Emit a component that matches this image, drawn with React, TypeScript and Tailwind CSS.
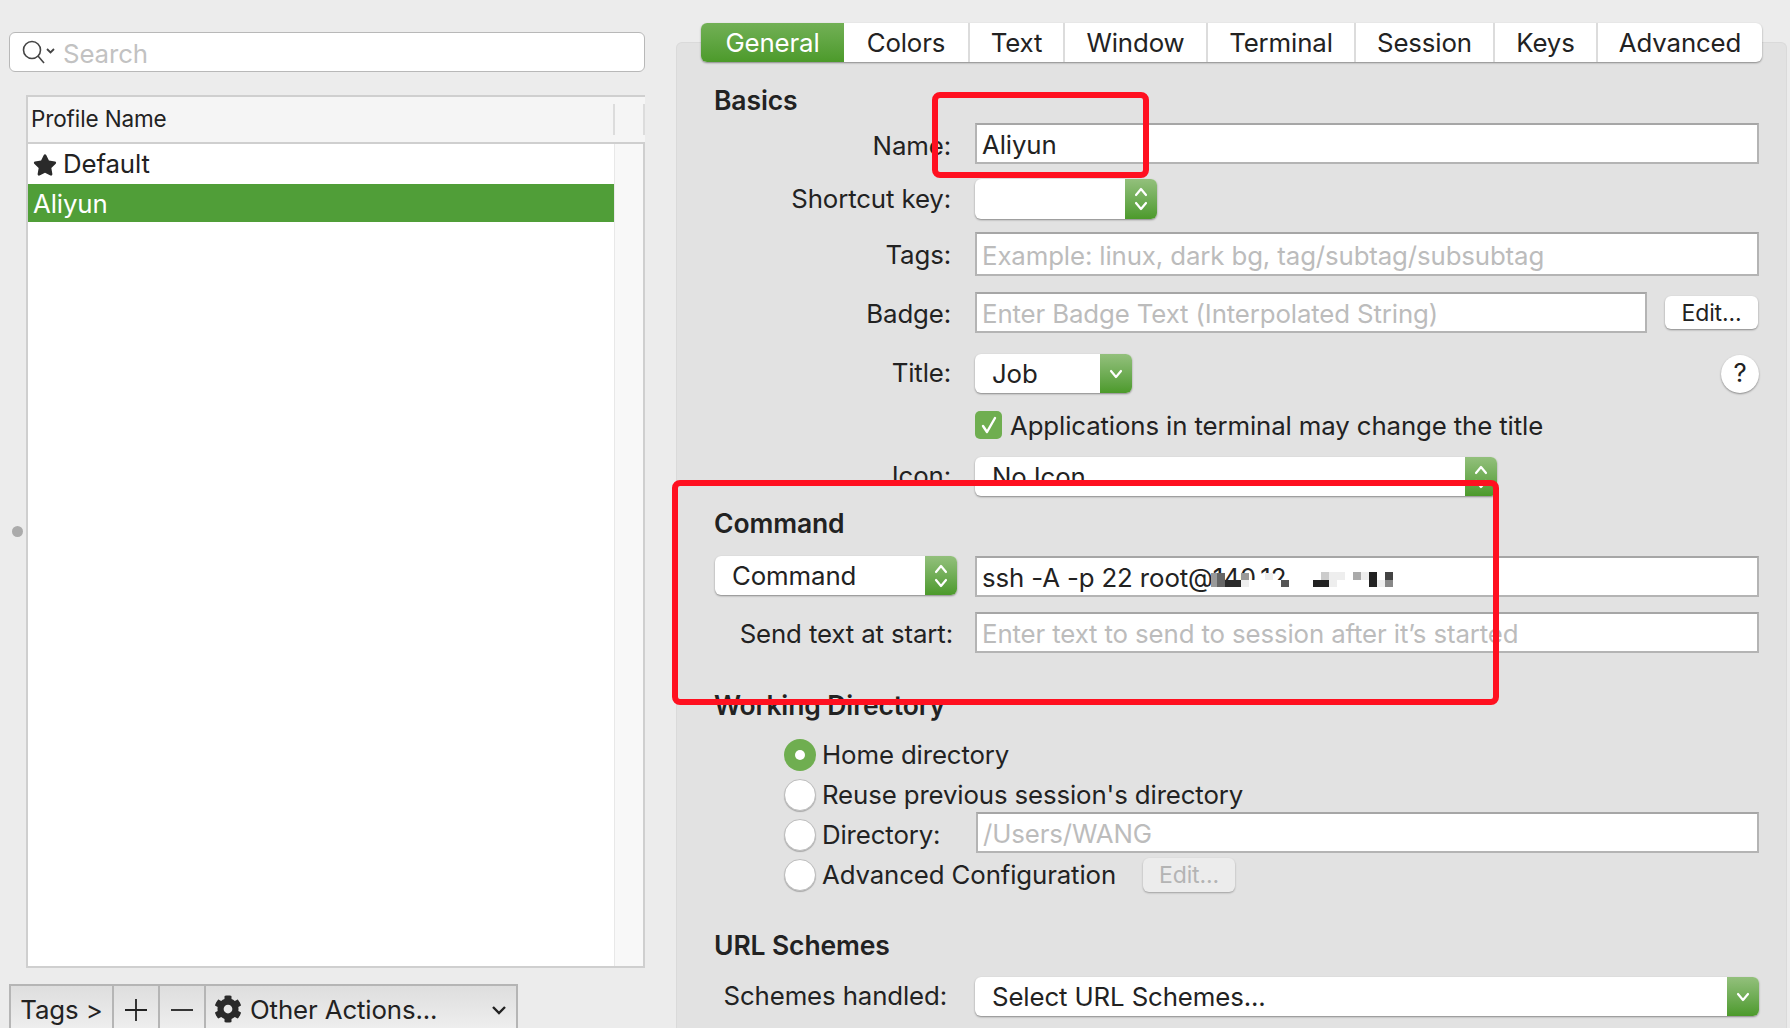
import type { ReactNode } from "react";
import { FaCog, FaStar } from "react-icons/fa";

const tabs = [
  { name: "Colors", w: "w-[124px]" },
  { name: "Text", w: "w-[95px]" },
  { name: "Window", w: "w-[143px]" },
  { name: "Terminal", w: "w-[148px]" },
  { name: "Session", w: "w-[139px]" },
  { name: "Keys", w: "w-[103px]" },
  { name: "Advanced", w: "flex-1" },
];

function Row({ label, className, labelClass = "pt-[3px]", children }: { label: string; className: string; labelClass?: string; children: ReactNode }) {
  return (
    <div className={`flex items-center gap-[24px] ${className}`}>
      <div className={`w-[236px] shrink-0 whitespace-nowrap text-right text-[#222] ${labelClass}`}>{label}</div>
      {children}
    </div>
  );
}

function Heading({ children, className }: { children: ReactNode; className: string }) {
  return <div className={`-ml-[1px] h-[30px] text-[26.5px] leading-[30px] font-semibold text-[#222] ${className}`}>{children}</div>;
}

function Field({ text, placeholder, className = "flex-1 h-full" }: { text?: string; placeholder?: string; className?: string }) {
  return (
    <div className={`flex items-center bg-white border-2 border-[#b4b4b4] border-t-[#a6a6a6] pl-[5px] pt-[4px] ${className}`}>
      {text ? <span className="text-[#222]">{text}</span> : <span className="text-[#bcbcbc]">{placeholder}</span>}
    </div>
  );
}

function Stepper() {
  return (
    <div className="flex h-full w-[32px] shrink-0 items-center justify-center bg-gradient-to-b from-[#93c07c] to-[#4c9a2a]">
      <svg width="16" height="28" viewBox="0 0 16 28" fill="none" stroke="white" strokeWidth="2.2" strokeLinecap="round" strokeLinejoin="round">
        <path d="M3 10 8 4l5 6" />
        <path d="M3 18l5 6 5-6" />
      </svg>
    </div>
  );
}

function Caret() {
  return (
    <div className="flex h-full w-[32px] shrink-0 items-center justify-center bg-gradient-to-b from-[#93c07c] to-[#4c9a2a]">
      <svg width="16" height="12" viewBox="0 0 16 12" fill="none" stroke="white" strokeWidth="2.2" strokeLinecap="round" strokeLinejoin="round">
        <path d="M3 3l5 6 5-6" />
      </svg>
    </div>
  );
}

function Select({ text, className, children }: { text?: string; className: string; children: ReactNode }) {
  return (
    <div className={`flex items-center overflow-hidden rounded-[6px] bg-white shadow-[0_1px_2px_rgba(0,0,0,0.4)] ${className}`}>
      <span className="flex-1 pl-[17px] pt-[2px] text-[#222]">{text}</span>
      {children}
    </div>
  );
}

function Radio({ on, label, children }: { on?: boolean; label: string; children?: ReactNode }) {
  return (
    <div className="flex h-[40px] items-center pl-[69px]">
      {on ? (
        <div className="flex h-[32px] w-[32px] items-center justify-center rounded-full bg-[#6fae50]">
          <div className="h-[10px] w-[10px] rounded-full bg-white" />
        </div>
      ) : (
        <div className="h-[32px] w-[32px] rounded-full border border-[#bdbdbd] bg-white shadow-[0_1px_1px_rgba(0,0,0,0.25)]" />
      )}
      <span className="ml-[6px] whitespace-nowrap text-[#222]">{label}</span>
      {children}
    </div>
  );
}

export default function App() {
  return (
    <div className="relative flex h-[1028px] w-[1790px] overflow-hidden bg-[#ececec] font-['Inter',sans-serif] text-[25.8px] tracking-[-0.12px]">
      {/* profile list */}
      <div className="relative w-[676px] shrink-0 pl-[9px] pt-[32px]">
        <div className="flex h-[40px] w-[636px] items-center rounded-[6px] border border-[#b8b8b8] bg-white pl-[11px]">
          <svg width="36" height="28" viewBox="0 0 36 28" fill="none" stroke="#444" strokeWidth="1.6">
            <circle cx="11" cy="12" r="8.5" />
            <path d="M17 18l6 7" />
            <path d="M26 11l3.5 3.5 3.5-3.5" strokeWidth="1.8" />
          </svg>
          <span className="ml-[6px] pt-[4px] text-[#c2c2c2]">Search</span>
        </div>

        <div className="ml-[17px] mt-[23px] flex h-[873px] w-[619px] flex-col border-2 border-r-0 border-[#cfcfcf] bg-white">
          <div className="flex h-[47px] shrink-0 border-b-2 border-[#cfcfcf] bg-[#f5f5f5]">
            <div className="flex flex-1 items-center pb-[2px] pl-[3px] text-[22.5px] text-[#222]">Profile Name</div>
            <div className="my-[7px] w-[32px] shrink-0 border-l-2 border-r-2 border-[#dcdcdc]" />
          </div>
          <div className="flex flex-1">
            <div className="flex-1">
              <div className="flex h-[40px] items-center pl-[5px] pt-[1px] text-[#222]">
                <FaStar className="mr-[6px] h-[24px] w-[24px] text-[#2a2a2a]" />
                Default
              </div>
              <div className="flex h-[38px] items-center bg-[#509e38] pl-[5px] pt-[3px] text-white">Aliyun</div>
            </div>
            <div className="w-[31px] shrink-0 border-l border-r-2 border-l-[#e8e8e8] border-r-[#cfcfcf] bg-[#f8f8f8]" />
          </div>
        </div>

        <div className="mt-[16px] flex h-[60px] w-[509px] border-2 border-b-0 border-[#b5b5b5] bg-gradient-to-b from-[#dedede] to-[#f4f4f4] text-[#222]">
          <div className="flex w-[103px] items-start justify-center border-r-2 border-[#b5b5b5] pt-[5px]">Tags &gt;</div>
          <div className="flex w-[46px] items-start justify-center border-r-2 border-[#b5b5b5] pt-[12px]">
            <svg width="24" height="24" viewBox="0 0 24 24" stroke="#222" strokeWidth="1.8"><path d="M12 1v22M1 12h22" /></svg>
          </div>
          <div className="flex w-[46px] items-start justify-center border-r-2 border-[#b5b5b5] pt-[12px]">
            <svg width="24" height="24" viewBox="0 0 24 24" stroke="#222" strokeWidth="1.8"><path d="M1 12h22" /></svg>
          </div>
          <div className="flex flex-1 items-start pl-[8px] pt-[5px]">
            <FaCog className="mr-[8px] mt-[4px] h-[28px] w-[28px] text-[#2a2a2a]" />
            Other Actions...
            <svg className="ml-auto mr-[9px] mt-[13px]" width="16" height="12" viewBox="0 0 16 12" fill="none" stroke="#222" strokeWidth="2.4"><path d="M2 3l6 6 6-6" /></svg>
          </div>
        </div>

        <div className="absolute left-[12px] top-[526px] h-[11px] w-[11px] rounded-full bg-[#ababab]" />
      </div>

      {/* settings pane */}
      <div className="flex-1 pr-[3px] pt-[42px]">
        <div className="h-[1100px] rounded-t-[6px] border border-b-0 border-[#dadada] bg-[#e2e2e2] pl-[38px] pr-[27px]">
          <div className="-ml-[14px] -mr-[3px] -mt-[20px] flex h-[39px] rounded-[6px] bg-white shadow-[0_1px_2px_rgba(0,0,0,0.4)]">
            <div className="flex w-[143px] items-center justify-center rounded-l-[6px] bg-gradient-to-b from-[#72b055] to-[#4c9a2a] pt-[1px] text-white">General</div>
            {tabs.map((t, i) => (
              <div key={t.name} className={`flex items-center justify-center border-[#dcdcdc] pt-[1px] text-[#222] ${t.w} ${i > 0 ? "border-l-2" : ""}`}>
                {t.name}
              </div>
            ))}
          </div>

          <Heading className="mt-[23px]">Basics</Heading>
          <Row label="Name:" labelClass="pt-[5px]" className="mt-[8px] h-[41px]"><Field text="Aliyun" /></Row>
          <Row label="Shortcut key:" labelClass="pt-0" className="mt-[15px] h-[40px]">
            <Select className="h-full w-[182px]"><Stepper /></Select>
          </Row>
          <Row label="Tags:" labelClass="pt-[2px]" className="mt-[13px] h-[44px]"><Field placeholder="Example: linux, dark bg, tag/subtag/subsubtag" /></Row>
          <Row label="Badge:" className="mt-[16px] h-[41px]">
            <Field placeholder="Enter Badge Text (Interpolated String)" className="h-full w-[672px]" />
            <div className="-ml-[6px] flex h-[33px] w-[93px] items-center justify-center rounded-[6px] bg-white pt-[1px] text-[23px] text-[#222] shadow-[0_1px_2px_rgba(0,0,0,0.4)]">Edit...</div>
          </Row>
          <Row label="Title:" labelClass="pb-[1px]" className="mt-[21px] h-[39px]">
            <Select text="Job" className="h-full w-[157px]"><Caret /></Select>
            <div className="ml-auto flex h-[38px] w-[38px] items-center justify-center rounded-full bg-white text-[#222] shadow-[0_1px_2px_rgba(0,0,0,0.4)]">?</div>
          </Row>
          <div className="ml-[260px] mt-[18px] flex h-[28px] items-center">
            <div className="flex h-[28px] w-[27px] items-center justify-center rounded-[5px] bg-[#6fae50]">
              <svg width="20" height="22" viewBox="0 0 20 22" fill="none" stroke="white" strokeWidth="2.4" strokeLinecap="round" strokeLinejoin="round"><path d="M4 12l4 6 8-14" /></svg>
            </div>
            <span className="ml-[8px] pt-[2px] whitespace-nowrap text-[#222]">Applications in terminal may change the title</span>
          </div>
          <Row label="Icon:" labelClass="pt-0" className="mt-[18px] h-[39px]">
            <Select text="No Icon" className="h-full w-[522px]"><Stepper /></Select>
          </Row>

          <Heading className="mt-[12px]">Command</Heading>
          <div className="mt-[18px] flex h-[41px] items-start gap-[18px]">
            <Select text="Command" className="h-[39px] w-[242px]"><Stepper /></Select>
            <div className="relative h-full flex-1">
              <Field text="ssh -A -p 22 root@140.12" />
              {/* blurred out part of the address */}
              <svg className="absolute left-[236px] top-[14px]" width="200" height="20" viewBox="0 0 200 20">
                <rect x="0" y="10" width="200" height="10" fill="white" />
                <rect x="0" y="3" width="14" height="14" fill="#999" />
                <rect x="6" y="3" width="8" height="14" fill="#666" />
                <rect x="14" y="10" width="16" height="7" fill="#2a2a2a" />
                <rect x="30" y="3" width="8" height="7" fill="#999" />
                <rect x="30" y="10" width="8" height="7" fill="#eee" />
                <rect x="54" y="3" width="8" height="7" fill="#eee" />
                <rect x="70" y="10" width="8" height="7" fill="#555" />
                <rect x="102" y="10" width="16" height="7" fill="#222" />
                <rect x="110" y="2" width="8" height="8" fill="#ccc" />
                <rect x="118" y="2" width="8" height="15" fill="#eee" />
                <rect x="126" y="2" width="8" height="8" fill="#eee" />
                <rect x="142" y="2" width="8" height="8" fill="#aaa" />
                <rect x="150" y="2" width="8" height="8" fill="#eee" />
                <rect x="158" y="2" width="8" height="15" fill="#222" />
                <rect x="166" y="10" width="8" height="7" fill="#eee" />
                <rect x="174" y="2" width="8" height="8" fill="#444" />
                <rect x="174" y="10" width="8" height="7" fill="#888" />
              </svg>
            </div>
          </div>
          <Row label="Send text at start:" labelClass="translate-x-[2px] pt-[4px]" className="mt-[15px] h-[41px]"><Field placeholder="Enter text to send to session after it’s started" /></Row>

          <Heading className="mt-[37px]">Working Directory</Heading>
          <div className="mt-[15px]">
            <Radio on label="Home directory" />
            <Radio label="Reuse previous session's directory" />
            <Radio label="Directory:">
              <Field placeholder="/Users/WANG" className="-mt-[3px] ml-auto h-[41px] w-[783px] self-start" />
            </Radio>
            <Radio label="Advanced Configuration">
              <div className="ml-[27px] flex h-[34px] w-[92px] items-center justify-center rounded-[6px] bg-[#ececec] text-[23px] text-[#b4b4b4] shadow-[0_1px_2px_rgba(0,0,0,0.3)]">Edit...</div>
            </Radio>
          </div>

          <Heading className="mt-[35px]">URL Schemes</Heading>
          <Row label="Schemes handled:" labelClass="pt-0 pr-[4px]" className="mt-[17px] h-[39px]">
            <Select text="Select URL Schemes..." className="h-full flex-1"><Caret /></Select>
          </Row>
        </div>
      </div>

      {/* annotations */}
      <div className="absolute left-[932px] top-[92px] h-[86px] w-[217px] rounded-[8px] border-[6px] border-[#ff1020]" />
      <div className="absolute left-[672px] top-[480px] h-[225px] w-[827px] rounded-[8px] border-[6px] border-[#ff1020]" />
    </div>
  );
}
